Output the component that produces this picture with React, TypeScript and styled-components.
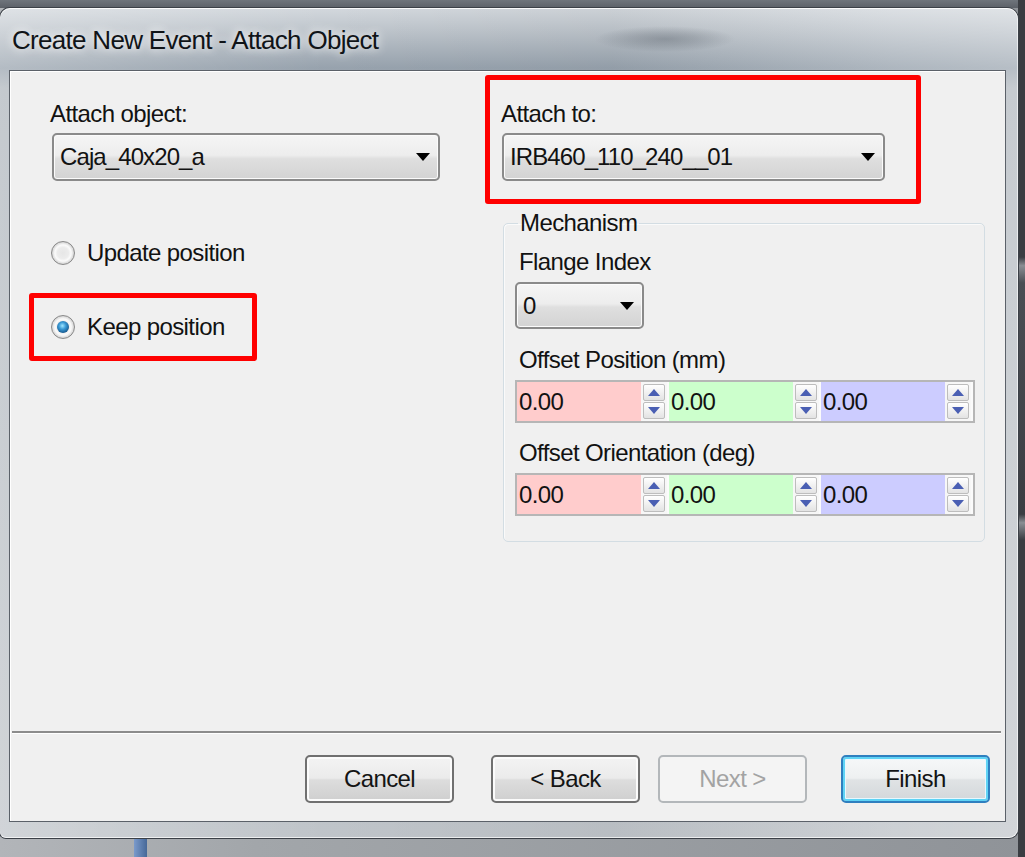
import React from "react";
import styled, { createGlobalStyle, css } from "styled-components";

const Global = createGlobalStyle`
  html, body { margin: 0; padding: 0; }
  body {
    width: 1025px; height: 857px; overflow: hidden;
    background: #9a9ea3;
    font-family: "Liberation Sans", Arial, sans-serif;
  }
`;

const Desktop = styled.div`
  width: 1025px;
  height: 857px;
  box-sizing: border-box;
  padding: 8px 7px 19px 0;
  display: flex;
  background-color: #8f9398;
  background-image:
    linear-gradient(90deg, #7a9acb, #466898),
    linear-gradient(180deg, #3a3d42 0, #3a3d42 30%, #8a8e93 31%, #4a4e54 33%, #3a3d42 60%, #8a8e93 61%, #3a3d42 63%),
    linear-gradient(180deg, #6f757c, #5c6168),
    linear-gradient(90deg, #b2b5b9 0, #a2a6aa 25%, #8f9398 100%);
  background-position: 134px 839px, 1018px 0, 0 0, 0 0;
  background-size: 13px 18px, 7px 857px, 1025px 8px, 1025px 857px;
  background-repeat: no-repeat;
`;

const Window = styled.div`
  flex: 1;
  display: flex;
  flex-direction: column;
  padding: 0 12px 16px 9px;
  border-radius: 10px 11px 9px 6px;
  background:
    radial-gradient(ellipse 70px 13px at 665px 31px, rgba(88, 96, 106, 0.42) 0, rgba(88, 96, 106, 0.25) 45%, rgba(88, 96, 106, 0) 100%),
    linear-gradient(90deg, rgba(255, 255, 255, 0.28) 0, rgba(255, 255, 255, 0) 32%, rgba(0, 0, 0, 0.03) 60%, rgba(255, 255, 255, 0.22) 88%, rgba(255, 255, 255, 0.3) 100%),
    linear-gradient(180deg, #d3d8dd 0, #bcc3ca 24px, #97a2ad 60px, #aeb5bc 80px, #bfc4c9 100%);
  box-shadow:
    inset 0 1px 0 rgba(255, 255, 255, 0.85),
    inset -1px 0 0 rgba(255, 255, 255, 0.6),
    inset 0 -1px 0 rgba(255, 255, 255, 0.7),
    0 0 0 1px #3b4047;
`;

const TitleBar = styled.div`
  height: 62px;
  box-sizing: border-box;
  padding: 17px 0 0 3px;
  font-size: 26px;
  line-height: 30px;
  letter-spacing: -0.7px;
  color: #101418;
  white-space: nowrap;
  text-shadow: 0 0 8px rgba(255, 255, 255, 0.9), 0 0 14px rgba(255, 255, 255, 0.6);
`;

const Client = styled.div`
  flex: 1;
  display: flex;
  flex-direction: column;
  background: #f0f0f0;
  border: 1px solid #5b6169;
  box-shadow: inset 1px 1px 0 #ffffff;
  color: #121212;
  font-size: 24px;
  letter-spacing: -0.6px;
`;

const Main = styled.div`
  height: 660px;
  box-sizing: border-box;
  padding: 4px 20px 0 19px;
  display: grid;
  grid-template-columns: 456px 500px;
  align-items: start;
`;

const Column = styled.div`
  display: flex;
  flex-direction: column;
  align-items: flex-start;
`;

const Field = styled.div`
  padding: 24px 0 0 21px;
  display: flex;
  flex-direction: column;
  align-items: flex-start;
`;

const Label = styled.div<{ $top?: number; $left?: number }>`
  height: 30px;
  line-height: 30px;
  white-space: nowrap;
  margin-top: ${(p) => p.$top ?? 0}px;
  margin-left: ${(p) => p.$left ?? 0}px;
`;

const Combo = styled.div<{ $w: number; $h?: number; $top?: number; $left?: number }>`
  box-sizing: border-box;
  width: ${(p) => p.$w}px;
  height: ${(p) => p.$h ?? 48}px;
  margin-top: ${(p) => p.$top ?? 4}px;
  margin-left: ${(p) => p.$left ?? 0}px;
  border: 2px solid #8a8a8a;
  border-radius: 5px;
  background: linear-gradient(180deg, #f5f5f5 0%, #ededed 46%, #dfdfdf 54%, #d3d3d3 100%);
  box-shadow: inset 0 0 0 1px #fbfbfb;
  display: flex;
  align-items: center;
  justify-content: space-between;
  padding: 0 8px 0 6px;
  white-space: nowrap;
  letter-spacing: -0.9px;
`;

const ArrowIcon = () => (
  <svg width="14" height="8" viewBox="0 0 14 8">
    <path d="M0 0 H14 L7 8 Z" fill="#000" />
  </svg>
);

const RadioRow = styled.div<{ $top?: number; $left?: number }>`
  display: flex;
  align-items: center;
  gap: 12px;
  height: 30px;
  margin-top: ${(p) => p.$top ?? 0}px;
  padding-left: ${(p) => p.$left ?? 0}px;
  white-space: nowrap;
`;

const RadioCircle = styled.span<{ $checked?: boolean }>`
  position: relative;
  flex: none;
  width: 24px;
  height: 24px;
  box-sizing: border-box;
  border-radius: 50%;
  border: 1px solid #8a8a8a;
  background: radial-gradient(circle, #e6e6e6 0, #ececec 36%, #fbfbfb 52%, #c9c9c9 76%, #a2a2a2 100%);
  ${(p) =>
    p.$checked &&
    css`
      &::after {
        content: "";
        position: absolute;
        inset: 5px;
        border-radius: 50%;
        background: radial-gradient(circle at 45% 40%, #9fe6ff 0, #3a9ad6 35%, #15578c 75%, #0c2f52 100%);
      }
    `}
`;

const Highlight = styled.div<{ $w: number; $h: number; $top?: number }>`
  box-sizing: border-box;
  width: ${(p) => p.$w}px;
  height: ${(p) => p.$h}px;
  margin-top: ${(p) => p.$top ?? 0}px;
  border: 5px solid #ff0000;
  border-radius: 3px;
`;

const KeepBox = styled(Highlight)`
  display: flex;
  align-items: center;
  padding-left: 17px;
`;

const AttachBox = styled(Highlight)`
  padding: 19px 0 0 11px;
  display: flex;
  flex-direction: column;
  align-items: flex-start;
`;

const GroupBox = styled.fieldset`
  margin: 6px 0 0 18px;
  width: 482px;
  height: 332px;
  box-sizing: border-box;
  border: 1px solid #d3dde3;
  border-radius: 5px;
  padding: 0 9px 0 11px;
  min-inline-size: 0;
  box-shadow: inset 1px 1px 0 #fafafa;
`;

const Legend = styled.legend`
  margin-left: 3px;
  padding: 0 2px;
  height: 26px;
  line-height: 26px;
`;

const NumRow = styled.div`
  margin-top: 5px;
  width: 460px;
  height: 43px;
  box-sizing: border-box;
  border: 2px solid #b6b6b6;
  background: #fbfbfb;
  display: grid;
  grid-template-columns: repeat(3, 1fr);
`;

const NumCell = styled.div`
  display: flex;
  padding-right: 2px;
`;

const NumValue = styled.div<{ $bg: string }>`
  flex: 1;
  background: ${(p) => p.$bg};
  line-height: 39px;
  padding-left: 2px;
`;

const Spinner = styled.div`
  width: 26px;
  display: flex;
  flex-direction: column;
  justify-content: center;
  align-items: center;
  gap: 1px;
  background: #f7f7f7;
`;

const SpinButton = styled.div`
  width: 22px;
  height: 17px;
  box-sizing: border-box;
  border: 1px solid #bdbdbd;
  border-radius: 2px;
  background: linear-gradient(180deg, #ffffff, #e3e3e3);
  display: flex;
  align-items: center;
  justify-content: center;
`;

const UpIcon = () => (
  <svg width="12" height="7" viewBox="0 0 12 7">
    <path d="M0 7 L6 0 L12 7 Z" fill="#4a5fb3" />
  </svg>
);

const DownIcon = () => (
  <svg width="12" height="7" viewBox="0 0 12 7">
    <path d="M0 0 L12 0 L6 7 Z" fill="#4a5fb3" />
  </svg>
);

const Separator = styled.div`
  height: 0;
  margin: 0 4px 0 2px;
  border-top: 2px solid #8c8c8c;
  border-bottom: 1px solid #ffffff;
`;

const Footer = styled.div`
  flex: 1;
  display: flex;
  align-items: flex-start;
  padding: 21px 0 0 295px;
`;

const Button = styled.button<{ $variant?: "default" | "disabled"; $gap?: number }>`
  width: 149px;
  height: 48px;
  box-sizing: border-box;
  margin-left: ${(p) => p.$gap ?? 0}px;
  padding: 0;
  border-radius: 5px;
  border: 2px solid #707070;
  background: linear-gradient(180deg, #f3f3f3 0%, #ebebeb 48%, #dddddd 52%, #cfcfcf 100%);
  box-shadow: inset 0 0 0 2px #fbfbfb;
  font-family: "Liberation Sans", Arial, sans-serif;
  font-size: 24px;
  letter-spacing: -0.6px;
  color: #141414;
  ${(p) =>
    p.$variant === "default" &&
    css`
      border-color: #2f7fbf;
      box-shadow: inset 0 0 0 2px #5fd3f5, inset 0 0 0 3px #e8f8ff;
      background: linear-gradient(180deg, #f6f8f9 0%, #eef0f1 48%, #e0e3e5 52%, #d3d7da 100%);
    `}
  ${(p) =>
    p.$variant === "disabled" &&
    css`
      border-color: #b3b7ba;
      box-shadow: none;
      background: #f4f4f4;
      color: #a3a3a3;
    `}
`;

const colors = ["#ffcccc", "#ccffcc", "#ccccff"];

const NumericTriplet = () => (
  <NumRow>
    {colors.map((c) => (
      <NumCell key={c}>
        <NumValue $bg={c}>0.00</NumValue>
        <Spinner>
          <SpinButton>
            <UpIcon />
          </SpinButton>
          <SpinButton>
            <DownIcon />
          </SpinButton>
        </Spinner>
      </NumCell>
    ))}
  </NumRow>
);

export default function App() {
  return (
    <>
      <Global />
      <Desktop>
        <Window>
          <TitleBar>Create New Event - Attach Object</TitleBar>
          <Client>
            <Main>
              <Column>
                <Field>
                  <Label>Attach object:</Label>
                  <Combo $w={388} $left={2}>
                    <span>Caja_40x20_a</span>
                    <ArrowIcon />
                  </Combo>
                </Field>
                <RadioRow $top={57} $left={22}>
                  <RadioCircle />
                  <span>Update position</span>
                </RadioRow>
                <KeepBox $w={228} $h={68} $top={25}>
                  <RadioRow>
                    <RadioCircle $checked />
                    <span>Keep position</span>
                  </RadioRow>
                </KeepBox>
              </Column>
              <Column>
                <AttachBox $w={436} $h={129}>
                  <Label>Attach to:</Label>
                  <Combo $w={383} $left={1}>
                    <span>IRB460_110_240__01</span>
                    <ArrowIcon />
                  </Combo>
                </AttachBox>
                <GroupBox>
                  <Legend>Mechanism</Legend>
                  <Label $top={11} $left={4}>
                    Flange Index
                  </Label>
                  <Combo $w={129} $h={47} $top={5}>
                    <span>0</span>
                    <ArrowIcon />
                  </Combo>
                  <Label $top={16} $left={4}>
                    Offset Position (mm)
                  </Label>
                  <NumericTriplet />
                  <Label $top={15} $left={4}>
                    Offset Orientation (deg)
                  </Label>
                  <NumericTriplet />
                </GroupBox>
              </Column>
            </Main>
            <Separator />
            <Footer>
              <Button>Cancel</Button>
              <Button $gap={37}>&lt; Back</Button>
              <Button $gap={18} $variant="disabled">
                Next &gt;
              </Button>
              <Button $gap={34} $variant="default">
                Finish
              </Button>
            </Footer>
          </Client>
        </Window>
      </Desktop>
    </>
  );
}
